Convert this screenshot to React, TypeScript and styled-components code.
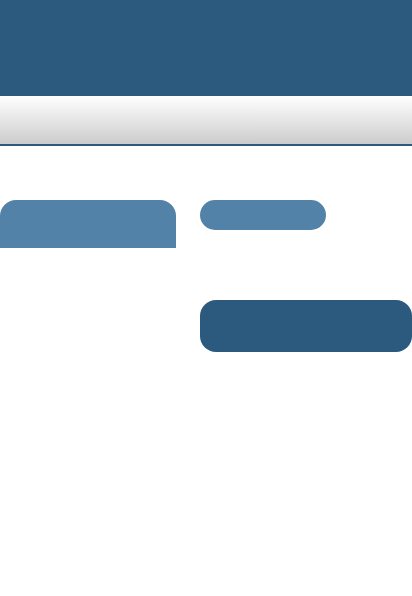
import React from "react";
import styled, { createGlobalStyle } from "styled-components";

const Global = createGlobalStyle`
  html, body { margin: 0; padding: 0; background: #ffffff; font-family: "Liberation Sans", Arial, sans-serif; }
  #root { width: 412px; min-height: 596px; }
`;

const Page = styled.div`
  width: 412px;
  min-height: 596px;
  display: flex;
  flex-direction: column;
  overflow: hidden;
`;

const Header = styled.header`
  height: 96px;
  background: #2c5a7f;
`;

const Toolbar = styled.nav`
  height: 48px;
  background: linear-gradient(to bottom, #ffffff 0%, #cccccc 100%);
  border-bottom: 2px solid #2c5a7f;
`;

const Content = styled.main`
  display: flex;
  gap: 24px;
  padding-top: 54px;
`;

const LeftColumn = styled.div`
  width: 176px;
  flex: none;
`;

const Tab = styled.div`
  height: 48px;
  background: #5282a8;
  border-radius: 16px 16px 0 0;
`;

const RightColumn = styled.div`
  width: 212px;
  flex: none;
  display: flex;
  flex-direction: column;
  align-items: flex-start;
  gap: 70px;
`;

const Pill = styled.div`
  width: 126px;
  height: 30px;
  border-radius: 15px;
  background: #5282a8;
`;

const Block = styled.div`
  width: 212px;
  height: 52px;
  border-radius: 16px;
  background: #2c5a7f;
`;

export default function App() {
  return (
    <>
      <Global />
      <Page>
        <Header />
        <Toolbar />
        <Content>
          <LeftColumn>
            <Tab />
          </LeftColumn>
          <RightColumn>
            <Pill />
            <Block />
          </RightColumn>
        </Content>
      </Page>
    </>
  );
}
